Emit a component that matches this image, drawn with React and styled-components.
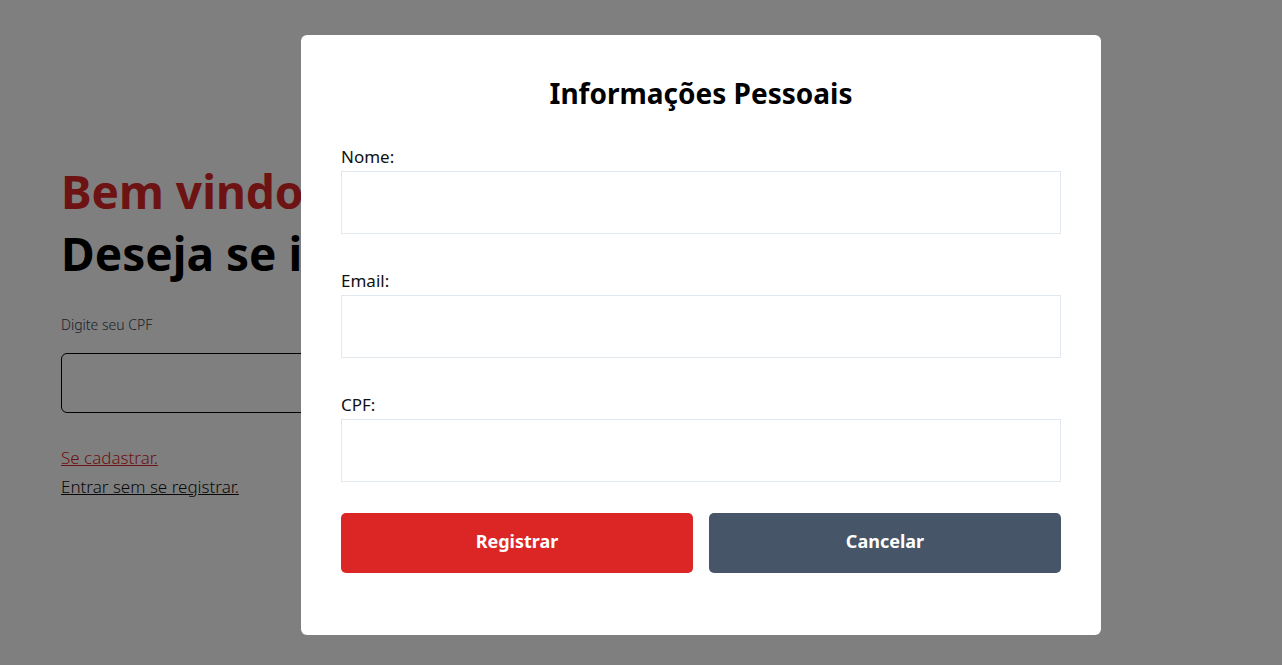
import styled, { createGlobalStyle } from 'styled-components'

const GlobalStyle = createGlobalStyle`
* { box-sizing: border-box; }
html, body { margin: 0; padding: 0; background: #fff; }
body { font-family: "Noto Sans", "Open Sans", sans-serif; }
`;

const Login = () => {
    return (
        <Page>
            <Side>
                <Welcome>Bem vindo</Welcome>
                <Question>Deseja se identificar?</Question>
                <Hint>Digite seu CPF</Hint>
                <CpfInput />
                <Links>
                    <Link red>Se cadastrar.</Link>
                    <Link>Entrar sem se registrar.</Link>
                </Links>
            </Side>
        </Page>
    );
}

const Field = ({ label }) => {
    return (
        <FieldGroup>
            <Label>{label}</Label>
            <Input />
        </FieldGroup>
    );
}

const App = () => {
    return (
        <>
            <GlobalStyle />
            <Login />
            <Overlay>
                <Modal>
                    <Title>Informações Pessoais</Title>
                    <Field label="Nome:" />
                    <Field label="Email:" />
                    <Field label="CPF:" />
                    <Buttons>
                        <Button bg="#dc2626">Registrar</Button>
                        <Button bg="#475569">Cancelar</Button>
                    </Buttons>
                </Modal>
            </Overlay>
        </>
    );
}

export default App;

const Page = styled.div`
width: 100%;
height: 665px;
display: flex;
padding: 160px 61px 0;
`;
const Side = styled.div`
width: 520px;
display: flex;
flex-direction: column;
`;
const Welcome = styled.h1`
margin: 0;
font-size: 46px;
line-height: 62px;
font-weight: 700;
color: #dc2626;
`;
const Question = styled.h2`
margin: 0;
font-size: 46px;
line-height: 62px;
font-weight: 700;
color: #000;
white-space: nowrap;
`;
const Hint = styled.div`
margin-top: 31px;
font-size: 14px;
font-weight: 300;
color: #374151;
`;
const CpfInput = styled.div`
margin-top: 19px;
height: 60px;
border: 1px solid #000;
border-radius: 6px;
`;
const Links = styled.div`
margin-top: 30px;
display: flex;
flex-direction: column;
align-items: flex-start;
`;
const Link = styled.a`
font-size: 17px;
line-height: 29px;
font-weight: 300;
color: ${p => p.red ? '#dc2626' : '#111'};
text-decoration: underline;
cursor: pointer;
`;
const Overlay = styled.div`
position: fixed;
inset: 0;
background: rgba(0, 0, 0, 0.5);
display: flex;
justify-content: center;
align-items: flex-start;
padding: 35px 0 0 120px;
`;
const Modal = styled.div`
width: 800px;
height: 600px;
background: #fff;
border-radius: 6px;
padding: 40px;
display: flex;
flex-direction: column;
`;
const Title = styled.div`
text-align: center;
font-size: 28px;
line-height: 36px;
font-weight: 700;
color: #000;
margin-bottom: 32px;
`;
const FieldGroup = styled.div`
display: flex;
flex-direction: column;
margin-bottom: 33px;
`;
const Label = styled.label`
font-size: 17px;
line-height: 28px;
color: #111;
`;
const Input = styled.div`
height: 63px;
border: 1px solid #e2e8f0;
`;
const Buttons = styled.div`
display: flex;
gap: 16px;
margin-top: -2px;
`;
const Button = styled.button`
flex: 1;
height: 60px;
padding: 0 0 4px;
border: none;
border-radius: 5px;
background: ${p => p.bg};
color: #fff;
font-family: inherit;
font-size: 18px;
font-weight: 700;
cursor: pointer;
`;
